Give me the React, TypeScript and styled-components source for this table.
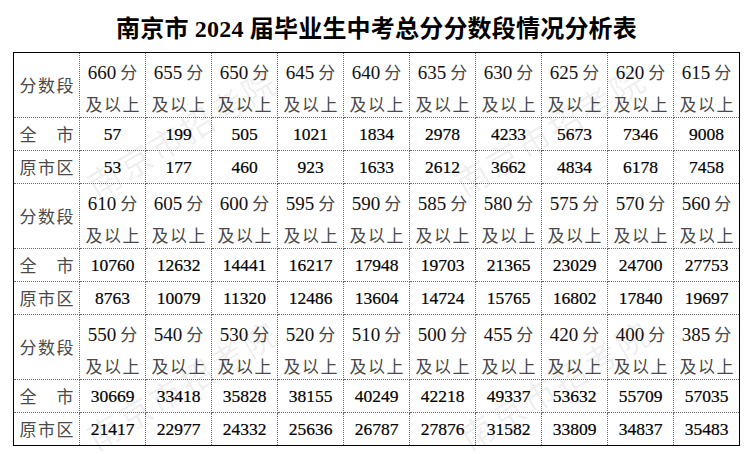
import styled, { createGlobalStyle } from 'styled-components';

const GlobalStyle = createGlobalStyle`
  html, body {
    margin: 0;
    padding: 0;
    background: #ffffff;
  }
  body {
    font-family: "Liberation Serif", "Noto Sans CJK SC", serif;
  }
`;

const groups = [
  {
    scores: [660, 655, 650, 645, 640, 635, 630, 625, 620, 615],
    all: [57, 199, 505, 1021, 1834, 2978, 4233, 5673, 7346, 9008],
    old: [53, 177, 460, 923, 1633, 2612, 3662, 4834, 6178, 7458],
  },
  {
    scores: [610, 605, 600, 595, 590, 585, 580, 575, 570, 560],
    all: [10760, 12632, 14441, 16217, 17948, 19703, 21365, 23029, 24700, 27753],
    old: [8763, 10079, 11320, 12486, 13604, 14724, 15765, 16802, 17840, 19697],
  },
  {
    scores: [550, 540, 530, 520, 510, 500, 455, 420, 400, 385],
    all: [30669, 33418, 35828, 38155, 40249, 42218, 49337, 53632, 55709, 57035],
    old: [21417, 22977, 24332, 25636, 26787, 27876, 31582, 33809, 34837, 35483],
  },
];

const marks = [
  { x: 182, y: 132 },
  { x: 550, y: 130 },
  { x: 182, y: 384 },
  { x: 555, y: 384 },
];

const Page = styled.div`
  position: relative;
  width: 751px;
  height: 454px;
  overflow: hidden;
`;

const Title = styled.h1`
  margin: 0;
  height: 52px;
  display: flex;
  align-items: center;
  justify-content: center;
  padding-left: 2px;
  font-family: "Liberation Serif", "Noto Sans CJK SC", serif;
  font-size: 24px;
  font-weight: 700;
  color: #000;
  letter-spacing: 0.2px;
`;

const TableWrap = styled.div`
  padding-left: 13px;
`;

const Table = styled.table`
  border-collapse: collapse;
  table-layout: fixed;
  width: 726px;
  border: 1px solid #000;
`;

const Col = styled.col`
  width: 66px;
`;

const HeadRow = styled.tr`
  height: 65px;
`;

const DataRow = styled.tr`
  height: 33px;
`;

const Cell = styled.td`
  border: 1px dotted #6a6a6a;
  padding: 0;
  text-align: center;
  vertical-align: middle;
  overflow: hidden;
`;

const Spread = styled.span<{ $lh?: number; $pt?: number }>`
  display: flex;
  justify-content: space-between;
  width: 54px;
  margin: 0 auto;
  padding-top: ${(p) => p.$pt ?? 0}px;
  font-family: "Noto Sans CJK SC", sans-serif;
  font-size: 17px;
  color: #4a4a4a;
  line-height: ${(p) => p.$lh ?? 22}px;
`;

const ScoreLine = styled.div`
  height: 32px;
  line-height: 38px;
  font-size: 19px;
  color: #111;
  white-space: nowrap;
`;

const Fen = styled.span`
  font-family: "Noto Sans CJK SC", sans-serif;
  font-size: 17px;
  color: #4a4a4a;
  margin-left: 4px;
`;

const Num = styled.span`
  font-family: "Liberation Serif", serif;
  font-size: 17.5px;
  line-height: 22px;
  color: #000;
  -webkit-text-stroke: 0.2px #000;
`;

const Mark = styled.div<{ $x: number; $y: number }>`
  position: absolute;
  left: ${(p) => p.$x}px;
  top: ${(p) => p.$y}px;
  transform: translate(-50%, -50%) rotate(-31deg);
  font-family: "Noto Sans CJK SC", sans-serif;
  font-size: 33px;
  line-height: 40px;
  letter-spacing: 3px;
  color: rgba(0, 0, 0, 0.075);
  white-space: nowrap;
  pointer-events: none;
`;

const Label = ({ text, lh, pt }: { text: string; lh?: number; pt?: number }) => (
  <Spread $lh={lh} $pt={pt}>
    {text.split('').map((c, i) => (
      <span key={i}>{c}</span>
    ))}
  </Spread>
);

const App = () => {
  return (
    <Page>
      <GlobalStyle />
      <Title>南京市 2024 届毕业生中考总分分数段情况分析表</Title>
      <TableWrap>
        <Table>
          <colgroup>
            {Array.from({ length: 11 }).map((_, i) => (
              <Col key={i} />
            ))}
          </colgroup>
          <tbody>
            {groups.map((g, gi) => [
              <HeadRow key={`h${gi}`}>
                <Cell>
                  <Label text='分数段' />
                </Cell>
                {g.scores.map((s) => (
                  <Cell key={s}>
                    <ScoreLine>
                      {s}
                      <Fen>分</Fen>
                    </ScoreLine>
                    <Label text='及以上' lh={26} pt={6} />
                  </Cell>
                ))}
              </HeadRow>,
              <DataRow key={`a${gi}`}>
                <Cell>
                  <Label text='全市' />
                </Cell>
                {g.all.map((n) => (
                  <Cell key={n}>
                    <Num>{n}</Num>
                  </Cell>
                ))}
              </DataRow>,
              <DataRow key={`o${gi}`}>
                <Cell>
                  <Label text='原市区' />
                </Cell>
                {g.old.map((n) => (
                  <Cell key={n}>
                    <Num>{n}</Num>
                  </Cell>
                ))}
              </DataRow>,
            ])}
          </tbody>
        </Table>
      </TableWrap>
      {marks.map((m, i) => (
        <Mark key={i} $x={m.x} $y={m.y}>
          南京市招考院
        </Mark>
      ))}
    </Page>
  );
};

export default App;
